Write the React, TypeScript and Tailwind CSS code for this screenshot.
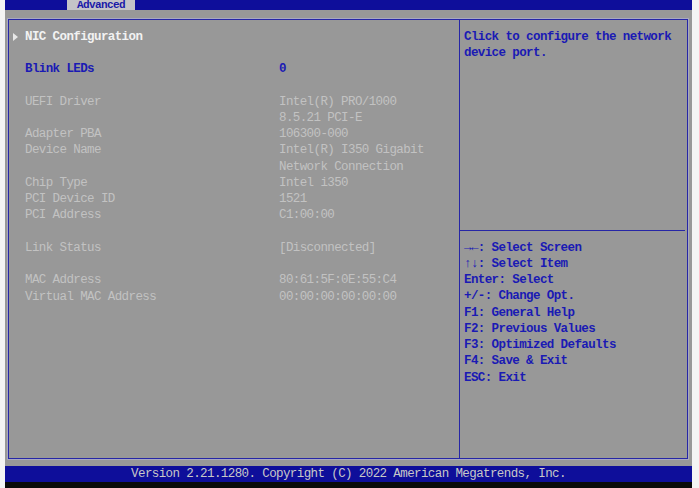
import React from "react";

const mono = { fontFamily: '"Liberation Mono", "DejaVu Sans Mono", monospace' };

type Row = { l?: string; v?: string; kind?: "blue" | "gray" | "blank" };

const rows: Row[] = [
  { kind: "blank" },
  { l: "Blink LEDs", v: "0", kind: "blue" },
  { kind: "blank" },
  { l: "UEFI Driver", v: "Intel(R) PRO/1000" },
  { l: "", v: "8.5.21 PCI-E" },
  { l: "Adapter PBA", v: "106300-000" },
  { l: "Device Name", v: "Intel(R) I350 Gigabit" },
  { l: "", v: "Network Connection" },
  { l: "Chip Type", v: "Intel i350" },
  { l: "PCI Device ID", v: "1521" },
  { l: "PCI Address", v: "C1:00:00" },
  { kind: "blank" },
  { l: "Link Status", v: "[Disconnected]" },
  { kind: "blank" },
  { l: "MAC Address", v: "80:61:5F:0E:55:C4" },
  { l: "Virtual MAC Address", v: "00:00:00:00:00:00" },
];

const help = [
  "→←: Select Screen",
  "↑↓: Select Item",
  "Enter: Select",
  "+/-: Change Opt.",
  "F1: General Help",
  "F2: Previous Values",
  "F3: Optimized Defaults",
  "F4: Save & Exit",
  "ESC: Exit",
];

export default function App() {
  return (
    <div
      className="w-[699px] h-[488px] bg-[#f4f4f4] overflow-hidden text-[12.5px] leading-[16.25px] tracking-[-0.6px]"
      style={mono}
    >
      <div className="ml-[5px] w-[687px] h-[488px] flex flex-col bg-[#989898]">
        {/* top bar */}
        <div className="h-[10px] bg-[#0e0e9a] flex">
          <div className="ml-[62px] w-[68px] h-[10px] bg-[#c4c4c8] overflow-hidden flex justify-center items-end">
            <span className="text-[11px] leading-[12px] -mb-[1px] text-[#1a1aa8] font-bold">Advanced</span>
          </div>
        </div>
        {/* frame area */}
        <div className="pt-[9px] pl-[3px] pr-[4px]">
          <div className="h-[440px] border border-[#2626a6] flex shadow-[0_0_0_1px_#a8a8c0]">
            {/* left panel */}
            <div className="w-[451px] border-r border-[#2626a6] pt-[8.5px] pl-[16px] relative">
              <div className="flex items-center">
                <span className="absolute left-[4px] top-[13px]">
                  <svg width="5" height="8" viewBox="0 0 5 8">
                    <polygon points="0,0 5,4 0,8" fill="#e8e8e8" />
                  </svg>
                </span>
                <span className="text-[#f2f2f2] font-bold">NIC Configuration</span>
              </div>
              {rows.map((r, i) =>
                r.kind === "blank" ? (
                  <div key={i} className="h-[16.25px]" />
                ) : (
                  <div key={i} className="flex h-[16.25px] whitespace-pre">
                    <span
                      className={
                        "w-[254px] " +
                        (r.kind === "blue" ? "text-[#1a1ab4] font-bold" : "text-[#c2c2c2]")
                      }
                    >
                      {r.l}
                    </span>
                    <span className={r.kind === "blue" ? "text-[#1a1ab4] font-bold" : "text-[#c2c2c2]"}>
                      {r.v}
                    </span>
                  </div>
                )
              )}
            </div>
            {/* right panel */}
            <div className="flex-1 flex flex-col">
              <div className="h-[210px] pt-[8.5px] pl-[4px] text-[#1a1ab4] font-bold">
                <div>Click to configure the network</div>
                <div>device port.</div>
              </div>
              <div className="h-px bg-[#2626a6] mr-[2px]" />
              <div className="pt-[8.5px] pl-[4px] text-[#1a1ab4] font-bold whitespace-pre">
                {help.map((h) => (
                  <div key={h} className="h-[16.25px]">
                    {h}
                  </div>
                ))}
              </div>
            </div>
          </div>
        </div>
        <div className="h-[7px]" />
        {/* footer */}
        <div className="h-[16px] bg-[#0e0e9a] flex items-center justify-center text-[#c8c8c8]">
          Version 2.21.1280. Copyright (C) 2022 American Megatrends, Inc.
        </div>
        <div className="flex-1 bg-[#0a0a0a]" />
      </div>
    </div>
  );
}
